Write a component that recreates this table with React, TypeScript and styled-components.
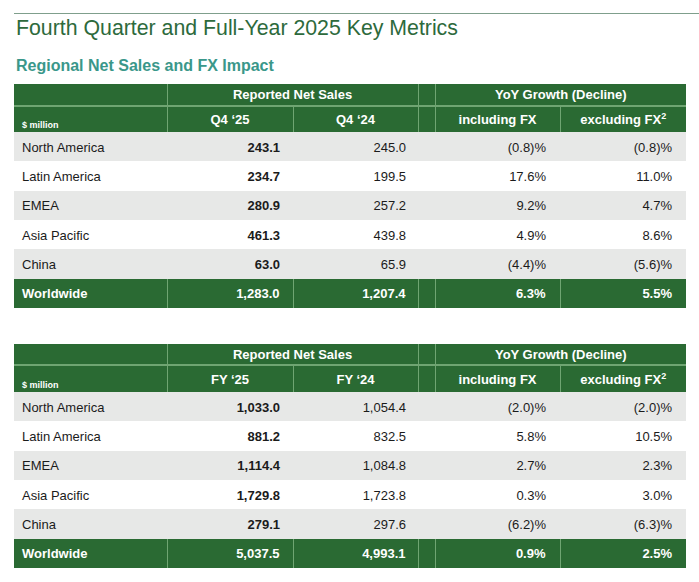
import styled, { createGlobalStyle } from "styled-components";

const GlobalStyle = createGlobalStyle`
  html, body {
    margin: 0;
    padding: 0;
    background: #ffffff;
  }
  body {
    font-family: "Liberation Sans", Arial, sans-serif;
  }
`;

const green = "#2a6a33";
const line = "#6fa572";

const Page = styled.div`
  padding: 13px 0 0 14px;
  width: 685px;
`;

const TitleBar = styled.header`
  border-top: 1px solid #7f9f8c;
  padding-top: 2px;
`;

const Title = styled.h1`
  margin: 0;
  padding-left: 2px;
  font-size: 21.3px;
  line-height: 24px;
  font-weight: 400;
  color: #2d6a3c;
`;

const Subtitle = styled.h2`
  margin: 16px 0 8px;
  padding-left: 2px;
  font-size: 16px;
  line-height: 20px;
  font-weight: 700;
  color: #3a978a;
`;

const Table = styled.table`
  width: 672px;
  border-collapse: collapse;
  table-layout: fixed;
  font-size: 13px;
  color: #1b1b1b;
  & + & {
    margin-top: 36px;
  }
`;

const HeadRow = styled.tr<{ $tall?: boolean }>`
  height: ${(p) => (p.$tall ? "26.5px" : "21.5px")};
  background: ${green};
`;

const HeadCell = styled.th<{ $edge?: boolean; $under?: boolean }>`
  padding: 0;
  color: #ffffff;
  font-weight: 700;
  text-align: center;
  vertical-align: middle;
  border-right: ${(p) => (p.$edge ? `1px solid ${line}` : "none")};
  border-bottom: ${(p) => (p.$under ? `2px solid ${line}` : "none")};
`;

const UnitCell = styled.th`
  padding: 0 0 2px 8px;
  color: #ffffff;
  font-size: 9px;
  font-weight: 700;
  text-align: left;
  vertical-align: bottom;
  border-right: 1px solid ${line};
`;

const Sup = styled.sup`
  font-size: 9px;
  line-height: 0;
  vertical-align: 5px;
`;

const Row = styled.tr<{ $shade?: boolean; $total?: boolean }>`
  height: 29.33px;
  background: ${(p) => (p.$total ? green : p.$shade ? "#e7e8e7" : "#ffffff")};
  color: ${(p) => (p.$total ? "#ffffff" : "#1b1b1b")};
  font-weight: ${(p) => (p.$total ? 700 : 400)};
`;

const NameCell = styled.td<{ $total?: boolean }>`
  padding: 1px 0 0 8px;
  text-align: left;
  vertical-align: middle;
  border-right: ${(p) => (p.$total ? `1px solid ${line}` : "none")};
`;

const Num = styled.td<{ $strong?: boolean; $total?: boolean; $pad?: number }>`
  padding: 1px ${(p) => p.$pad ?? 13}px 0 0;
  text-align: right;
  vertical-align: middle;
  font-weight: ${(p) => (p.$strong || p.$total ? 700 : "inherit")};
  border-right: ${(p) => (p.$total ? `1px solid ${line}` : "none")};
`;

const Gap = styled.td<{ $total?: boolean }>`
  padding: 0;
  border-right: ${(p) => (p.$total ? `1px solid ${line}` : "none")};
`;

type Line = [string, string, string, string, string];

const quarter: Line[] = [
  ["North America", "243.1", "245.0", "(0.8)%", "(0.8)%"],
  ["Latin America", "234.7", "199.5", "17.6%", "11.0%"],
  ["EMEA", "280.9", "257.2", "9.2%", "4.7%"],
  ["Asia Pacific", "461.3", "439.8", "4.9%", "8.6%"],
  ["China", "63.0", "65.9", "(4.4)%", "(5.6)%"],
  ["Worldwide", "1,283.0", "1,207.4", "6.3%", "5.5%"],
];

const fullYear: Line[] = [
  ["North America", "1,033.0", "1,054.4", "(2.0)%", "(2.0)%"],
  ["Latin America", "881.2", "832.5", "5.8%", "10.5%"],
  ["EMEA", "1,114.4", "1,084.8", "2.7%", "2.3%"],
  ["Asia Pacific", "1,729.8", "1,723.8", "0.3%", "3.0%"],
  ["China", "279.1", "297.6", "(6.2)%", "(6.3)%"],
  ["Worldwide", "5,037.5", "4,993.1", "0.9%", "2.5%"],
];

function MetricsTable({ current, prior, rows }: { current: string; prior: string; rows: Line[] }) {
  return (
    <Table>
      <colgroup>
        <col style={{ width: 153 }} />
        <col style={{ width: 126 }} />
        <col style={{ width: 125 }} />
        <col style={{ width: 17 }} />
        <col style={{ width: 125 }} />
        <col style={{ width: 126 }} />
      </colgroup>
      <thead>
        <HeadRow>
          <HeadCell $edge $under />
          <HeadCell colSpan={2} $edge $under>
            Reported Net Sales
          </HeadCell>
          <HeadCell $edge $under />
          <HeadCell colSpan={2} $under>
            YoY Growth (Decline)
          </HeadCell>
        </HeadRow>
        <HeadRow $tall>
          <UnitCell>$ million</UnitCell>
          <HeadCell $edge>{current}</HeadCell>
          <HeadCell $edge>{prior}</HeadCell>
          <HeadCell $edge />
          <HeadCell $edge>including FX</HeadCell>
          <HeadCell>
            excluding FX<Sup>2</Sup>
          </HeadCell>
        </HeadRow>
      </thead>
      <tbody>
        {rows.map(([name, a, b, c, d], i) => {
          const total = i === rows.length - 1;
          return (
            <Row key={name} $shade={i % 2 === 0} $total={total}>
              <NameCell $total={total}>{name}</NameCell>
              <Num $strong $total={total}>
                {a}
              </Num>
              <Num $total={total} $pad={12}>
                {b}
              </Num>
              <Gap $total={total} />
              <Num $total={total} $pad={14}>
                {c}
              </Num>
              <Num $pad={14}>{d}</Num>
            </Row>
          );
        })}
      </tbody>
    </Table>
  );
}

export default function App() {
  return (
    <>
      <GlobalStyle />
      <Page>
        <TitleBar>
          <Title>Fourth Quarter and Full-Year 2025 Key Metrics</Title>
        </TitleBar>
        <Subtitle>Regional Net Sales and FX Impact</Subtitle>
        <MetricsTable current="Q4 ‘25" prior="Q4 ‘24" rows={quarter} />
        <MetricsTable current="FY ‘25" prior="FY ‘24" rows={fullYear} />
      </Page>
    </>
  );
}
